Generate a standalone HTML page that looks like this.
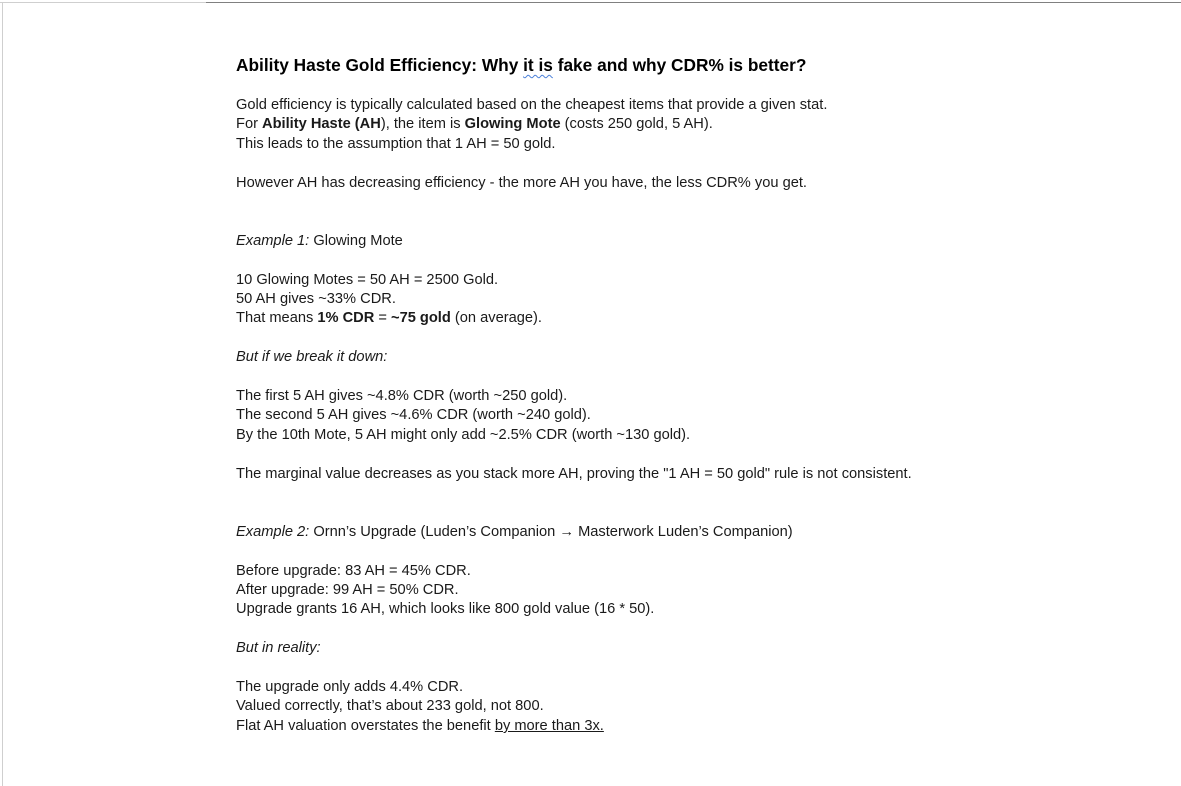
<!DOCTYPE html>
<html><head><meta charset="utf-8"><style>
html,body{margin:0;padding:0;background:#fff;width:1181px;height:786px;overflow:hidden;position:relative}
body{font-family:"Liberation Sans",Arial,sans-serif;color:#1a1a1a;font-size:14.65px}
.l{position:absolute;left:236px;white-space:nowrap;line-height:20px}
.t{font-weight:bold;font-size:17.3px;color:#000}
.sq{text-decoration:underline wavy #4a7fd8;text-decoration-thickness:1px;text-underline-offset:3px}
</style></head><body>
<div style="position:absolute;left:0;top:2px;width:206px;height:1px;background:#cfcfcf"></div>
<div style="position:absolute;left:206px;top:2px;width:975px;height:1px;background:#808080"></div>
<div style="position:absolute;left:2px;top:2px;width:1px;height:784px;background:#cfcfcf"></div>
<div class="l t" style="top:55px">Ability Haste Gold Efficiency: Why <span class="sq">it is</span> fake and why CDR% is better?</div>
<div class="l" style="top:95px">Gold efficiency is typically calculated based on the cheapest items that provide a given stat.</div>
<div class="l" style="top:114px">For <b>Ability Haste (AH</b>), the item is <b>Glowing Mote</b> (costs 250 gold, 5 AH).</div>
<div class="l" style="top:134px">This leads to the assumption that 1 AH = 50 gold.</div>
<div class="l" style="top:173px">However AH has decreasing efficiency - the more AH you have, the less CDR% you get.</div>
<div class="l" style="top:231px"><i>Example 1:</i> Glowing Mote</div>
<div class="l" style="top:270px">10 Glowing Motes = 50 AH = 2500 Gold.</div>
<div class="l" style="top:289px">50 AH gives ~33% CDR.</div>
<div class="l" style="top:308px">That means <b>1% CDR</b> = <b>~75 gold</b> (on average).</div>
<div class="l" style="top:347px"><i>But if we break it down:</i></div>
<div class="l" style="top:386px">The first 5 AH gives ~4.8% CDR (worth ~250 gold).</div>
<div class="l" style="top:405px">The second 5 AH gives ~4.6% CDR (worth ~240 gold).</div>
<div class="l" style="top:425px">By the 10th Mote, 5 AH might only add ~2.5% CDR (worth ~130 gold).</div>
<div class="l" style="top:464px">The marginal value decreases as you stack more AH, proving the "1 AH = 50 gold" rule is not consistent.</div>
<div class="l" style="top:522px"><i>Example 2:</i> Ornn’s Upgrade (Luden’s Companion → Masterwork Luden’s Companion)</div>
<div class="l" style="top:561px">Before upgrade: 83 AH = 45% CDR.</div>
<div class="l" style="top:580px">After upgrade: 99 AH = 50% CDR.</div>
<div class="l" style="top:599px">Upgrade grants 16 AH, which looks like 800 gold value (16 * 50).</div>
<div class="l" style="top:638px"><i>But in reality:</i></div>
<div class="l" style="top:677px">The upgrade only adds 4.4% CDR.</div>
<div class="l" style="top:696px">Valued correctly, that’s about 233 gold, not 800.</div>
<div class="l" style="top:716px">Flat AH valuation overstates the benefit <u>by more than 3x.</u></div>
</body></html>
